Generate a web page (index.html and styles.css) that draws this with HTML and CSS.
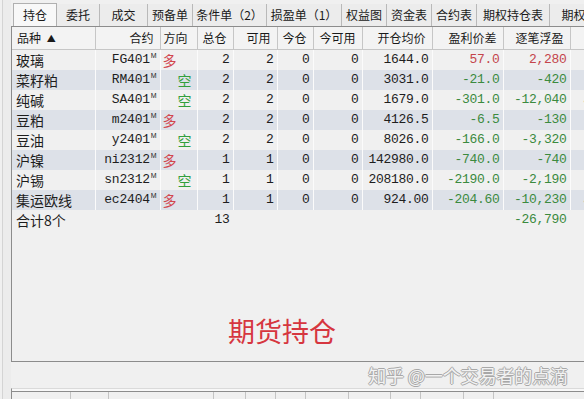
FILE: index.html
```html
<!DOCTYPE html>
<html lang="zh-CN">
<head>
<meta charset="utf-8">
<title>期货持仓</title>
<link rel="stylesheet" href="styles.css">
</head>
<body>
<div class="app">
  <div class="gutter"></div>
  <div class="main">
    <div class="tabs">
      <div class="tab active w44">持仓</div>
      <div class="tab w43">委托</div>
      <div class="tab w48">成交</div>
      <div class="tab w45">预备单</div>
      <div class="tab w74">条件单（2）</div>
      <div class="tab w75">损盈单（1）</div>
      <div class="tab w45">权益图</div>
      <div class="tab w45">资金表</div>
      <div class="tab w45">合约表</div>
      <div class="tab w73">期权持仓表</div>
      <div class="tab w60">期权行</div>
    </div>
    <div class="panel">
      <table class="grid">
        <colgroup>
          <col class="c82"><col class="c65"><col class="c37"><col class="c36"><col class="c44"><col class="c36"><col class="c49"><col class="c70"><col class="c71"><col class="c67"><col class="c40">
        </colgroup>
        <thead>
          <tr>
            <th class="left">品种 <span class="arrow">▲</span></th>
            <th>合约</th>
            <th class="dir">方向</th>
            <th>总仓</th>
            <th>可用</th>
            <th>今仓</th>
            <th>今可用</th>
            <th>开仓均价</th>
            <th>盈利价差</th>
            <th>逐笔浮盈</th>
            <th></th>
          </tr>
        </thead>
        <tbody>
          <tr>
            <td class="name">玻璃</td><td class="code">FG401<sup>M</sup></td><td class="long">多</td>
            <td class="num">2</td><td class="num">2</td><td class="num">0</td><td class="num">0</td><td class="num">1644.0</td><td class="num up">57.0</td><td class="num up">2,280</td><td></td>
          </tr>
          <tr class="alt">
            <td class="name">菜籽粕</td><td class="code">RM401<sup>M</sup></td><td class="short">空</td>
            <td class="num">2</td><td class="num">2</td><td class="num">0</td><td class="num">0</td><td class="num">3031.0</td><td class="num down">-21.0</td><td class="num down">-420</td><td></td>
          </tr>
          <tr>
            <td class="name">纯碱</td><td class="code">SA401<sup>M</sup></td><td class="short">空</td>
            <td class="num">2</td><td class="num">2</td><td class="num">0</td><td class="num">0</td><td class="num">1679.0</td><td class="num down">-301.0</td><td class="num down">-12,040</td><td class="tick">·</td>
          </tr>
          <tr class="alt">
            <td class="name">豆粕</td><td class="code">m2401<sup>M</sup></td><td class="long">多</td>
            <td class="num">2</td><td class="num">2</td><td class="num">0</td><td class="num">0</td><td class="num">4126.5</td><td class="num down">-6.5</td><td class="num down">-130</td><td></td>
          </tr>
          <tr>
            <td class="name">豆油</td><td class="code">y2401<sup>M</sup></td><td class="short">空</td>
            <td class="num">2</td><td class="num">2</td><td class="num">0</td><td class="num">0</td><td class="num">8026.0</td><td class="num down">-166.0</td><td class="num down">-3,320</td><td></td>
          </tr>
          <tr class="alt">
            <td class="name">沪镍</td><td class="code">ni2312<sup>M</sup></td><td class="long">多</td>
            <td class="num">1</td><td class="num">1</td><td class="num">0</td><td class="num">0</td><td class="num">142980.0</td><td class="num down">-740.0</td><td class="num down">-740</td><td></td>
          </tr>
          <tr>
            <td class="name">沪锡</td><td class="code">sn2312<sup>M</sup></td><td class="short">空</td>
            <td class="num">1</td><td class="num">1</td><td class="num">0</td><td class="num">0</td><td class="num">208180.0</td><td class="num down">-2190.0</td><td class="num down">-2,190</td><td></td>
          </tr>
          <tr class="alt">
            <td class="name">集运欧线</td><td class="code">ec2404<sup>M</sup></td><td class="long">多</td>
            <td class="num">1</td><td class="num">1</td><td class="num">0</td><td class="num">0</td><td class="num">924.00</td><td class="num down">-204.60</td><td class="num down">-10,230</td><td class="tick">·</td>
          </tr>
          <tr class="total">
            <td class="name">合计8个</td><td></td><td></td>
            <td class="num">13</td><td></td><td></td><td></td><td></td><td></td><td class="num down">-26,790</td><td></td>
          </tr>
        </tbody>
      </table>
      <div class="caption">期货持仓</div>
    </div>
    <div class="footer">
      <span class="watermark">知乎 @一个交易者的点滴</span>
    </div>
    <div class="bottom">
      <div class="bcell b59"></div><div class="bcell b38"></div><div class="bcell b105"></div><div class="bcell b32"></div><div class="bcell b30"></div><div class="bcell b30"></div><div class="bcell b43"></div><div class="bcell b42"></div><div class="bcell b30"></div><div class="bcell b43"></div><div class="bcell b30"></div>
    </div>
  </div>
</div>
</body>
</html>
```

FILE: styles.css
```css
* { box-sizing: border-box; }
html, body {
  margin: 0;
  padding: 0;
  width: 584px;
  height: 399px;
  overflow: hidden;
  background: #f0f0f0;
  font-family: "Noto Sans CJK SC", "Noto Sans", sans-serif;
  color: #1e1e1e;
}
.app {
  display: flex;
  height: 399px;
}
.gutter {
  width: 9px;
  flex: none;
  margin-left: 2px;
  border-left: 1px solid #d4d4d4;
  background: #ececec;
}
.main {
  flex: none;
  width: 600px;
  display: flex;
  flex-direction: column;
}
.tabs {
  display: flex;
  height: 26px;
  padding-top: 4px;
  padding-left: 2px;
  font-size: 12px;
  line-height: 21px;
}
.tab {
  flex: none;
  text-align: center;
  border-right: 1px solid #b9b9b9;
  background: #ececec;
  color: #1a1a1a;
  white-space: nowrap;
}
.tab.active {
  background: #f8f8f8;
  border: 1px solid #b0b0b0;
  border-bottom: none;
  margin-top: -1px;
}
.w44 { width: 44px; }
.w43 { width: 43px; }
.w48 { width: 48px; }
.w45 { width: 45px; }
.w74 { width: 74px; }
.w75 { width: 75px; }
.w73 { width: 73px; }
.w60 { width: 60px; }

.panel {
  height: 336px;
  border: 1px solid #8c8c8c;
  border-right: none;
  background: #f0f0f0;
}
.grid {
  border-collapse: collapse;
  table-layout: fixed;
  width: 597px;
}
.c82 { width: 83px; }
.c65 { width: 65px; }
.c37 { width: 37px; }
.c36 { width: 36px; }
.c44 { width: 44px; }
.c49 { width: 49px; }
.c70 { width: 70px; }
.c71 { width: 71px; }
.c67 { width: 67px; }
.c40 { width: 39px; }

.grid th {
  height: 22px;
  padding: 0 6px 0 0;
  font-size: 12px;
  font-weight: normal;
  text-align: right;
  color: #1a1a1a;
  background: #f3f3f3;
  border-right: 1px solid #c6c6c6;
  border-bottom: 1px solid #c6c6c6;
  white-space: nowrap;
}
.grid th.left { text-align: left; padding-left: 5px; }
.grid th.dir { text-align: left; padding-left: 3px; }
.arrow { font-size: 9px; margin-left: 3px; position: relative; top: -1px; }

.grid td {
  height: 20px;
  padding: 0 2px 0 0;
  font-size: 14px;
  line-height: 20px;
  white-space: nowrap;
  overflow: hidden;
  border-right: 1px solid #fbfbfb;
}
.grid tr.alt td { background: #dde1e8; }
.grid td.name { padding-left: 4px; }
.grid td.code {
  text-align: right;
  padding-right: 3px;
  font-family: "Liberation Mono", monospace;
  font-size: 13px;
  letter-spacing: -0.2px;
}
.grid td.code sup {
  font-family: "Liberation Sans", sans-serif;
  font-size: 7px;
  vertical-align: 5px;
  line-height: 0;
  margin-left: 1px;
}
.grid td.long { color: #d2464e; padding-left: 2px; }
.grid td.short { color: #32a03c; padding-left: 17px; }
.grid td.num {
  text-align: right;
  font-family: "Liberation Mono", monospace;
  font-size: 13px;
  letter-spacing: -0.3px;
  padding-right: 3px;
}
.grid td.up { color: #c4454b; }
.grid td.down { color: #3b8a3e; }
.grid td.tick { padding-left: 8px; color: #555; }
.grid tr.total td { border-right-color: transparent; }

.caption {
  margin-top: 86px;
  padding-left: 216px;
  font-size: 27px;
  line-height: 30px;
  color: #d6363f;
}

.footer {
  height: 26px;
  padding-right: 43px;
  display: flex;
  justify-content: flex-end;
  align-items: center;
}
.watermark {
  font-size: 18px;
  color: #f2f2f2;
  letter-spacing: -0.1px;
  text-shadow: 1px 0 0 #a8a8a8, -1px 0 0 #a8a8a8, 0 1px 0 #a8a8a8, 0 -1px 0 #a8a8a8;
}
.bottom {
  flex: 1;
  display: flex;
  border-top: 1px solid #dadada;
  box-shadow: inset 0 2px 0 #f8f8f8, inset 0 3px 0 #8c8c8c;
  border-left: 1px solid #8c8c8c;
  padding-top: 3px;
}
.bcell { flex: none; border-right: 1px solid #c4c4c4; }
.b59 { width: 59px; }
.b38 { width: 38px; }
.b105 { width: 105px; }
.b32 { width: 32px; }
.b30 { width: 30px; }
.b43 { width: 43px; }
.b42 { width: 42px; }
```
